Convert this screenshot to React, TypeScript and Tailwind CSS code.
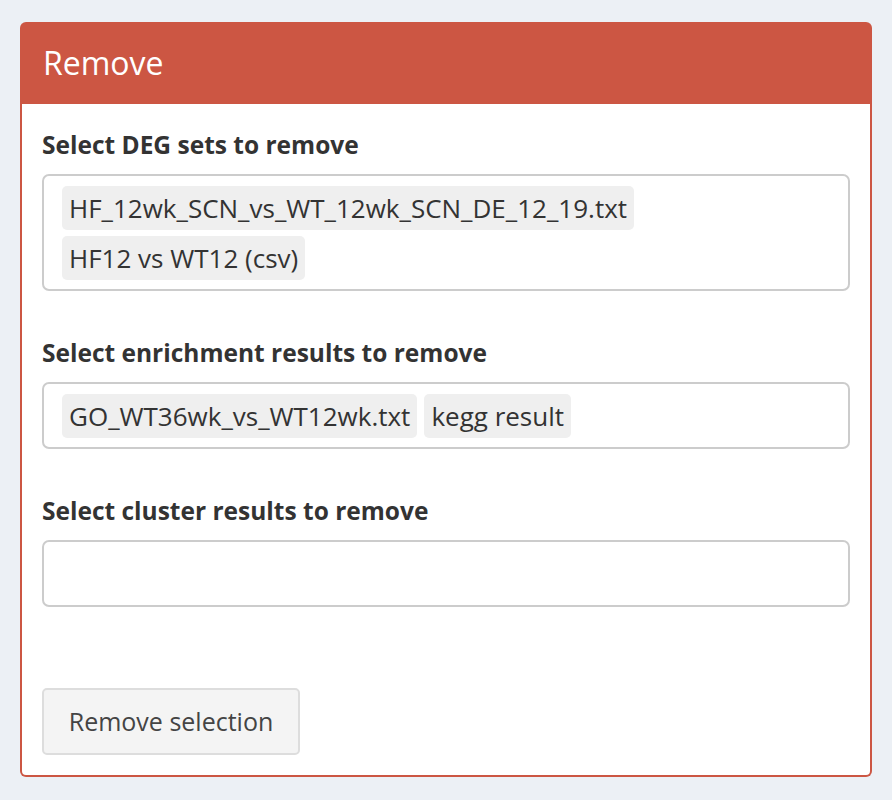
import React from 'react';

const font = { fontFamily: '"Open Sans", "Noto Sans", sans-serif' };

function Chip({ children }: { children: React.ReactNode }) {
  return (
    <span className="inline-flex h-[44px] items-center rounded-[5px] bg-[#efefef] px-[7px] text-[26px] text-[#333]">
      {children}
    </span>
  );
}

function Field({ label, items, first }: { label: string; items: string[]; first?: boolean }) {
  return (
    <div className={first ? '' : 'mt-[44px]'}>
      <div className="h-[36px] text-[24.5px] leading-[36px] font-bold text-[#333]">{label}</div>
      <div className="mt-[11px] flex min-h-[67px] flex-wrap gap-x-[7px] gap-y-[6px] rounded-[7px] border-2 border-[#cccccc] bg-white pt-[10px] pb-[9px] pl-[18px] pr-[12px]">
        {items.map((it) => (
          <Chip key={it}>{it}</Chip>
        ))}
      </div>
    </div>
  );
}

export default function App() {
  return (
    <div className="min-h-screen bg-[#ecf0f5] pt-[22px] px-[20px]" style={font}>
      <div className="w-[852px]">
        <div className="flex h-[82px] items-center rounded-t-[6px] bg-[#cc5643] px-[23px] text-[32px] text-white">
          Remove
        </div>
        <div className="rounded-b-[6px] border-2 border-t-0 border-[#cc5643] bg-white px-[20px] pt-[23px] pb-[20px]">
          <Field
            first
            label="Select DEG sets to remove"
            items={['HF_12wk_SCN_vs_WT_12wk_SCN_DE_12_19.txt', 'HF12 vs WT12 (csv)']}
          />
          <Field label="Select enrichment results to remove" items={['GO_WT36wk_vs_WT12wk.txt', 'kegg result']} />
          <Field label="Select cluster results to remove" items={[]} />
          <button className="mt-[81px] h-[67px] w-[258px] rounded-[5px] border-2 border-[#dddddd] bg-[#f4f4f4] text-[25px] text-[#444]">
            Remove selection
          </button>
        </div>
      </div>
    </div>
  );
}
